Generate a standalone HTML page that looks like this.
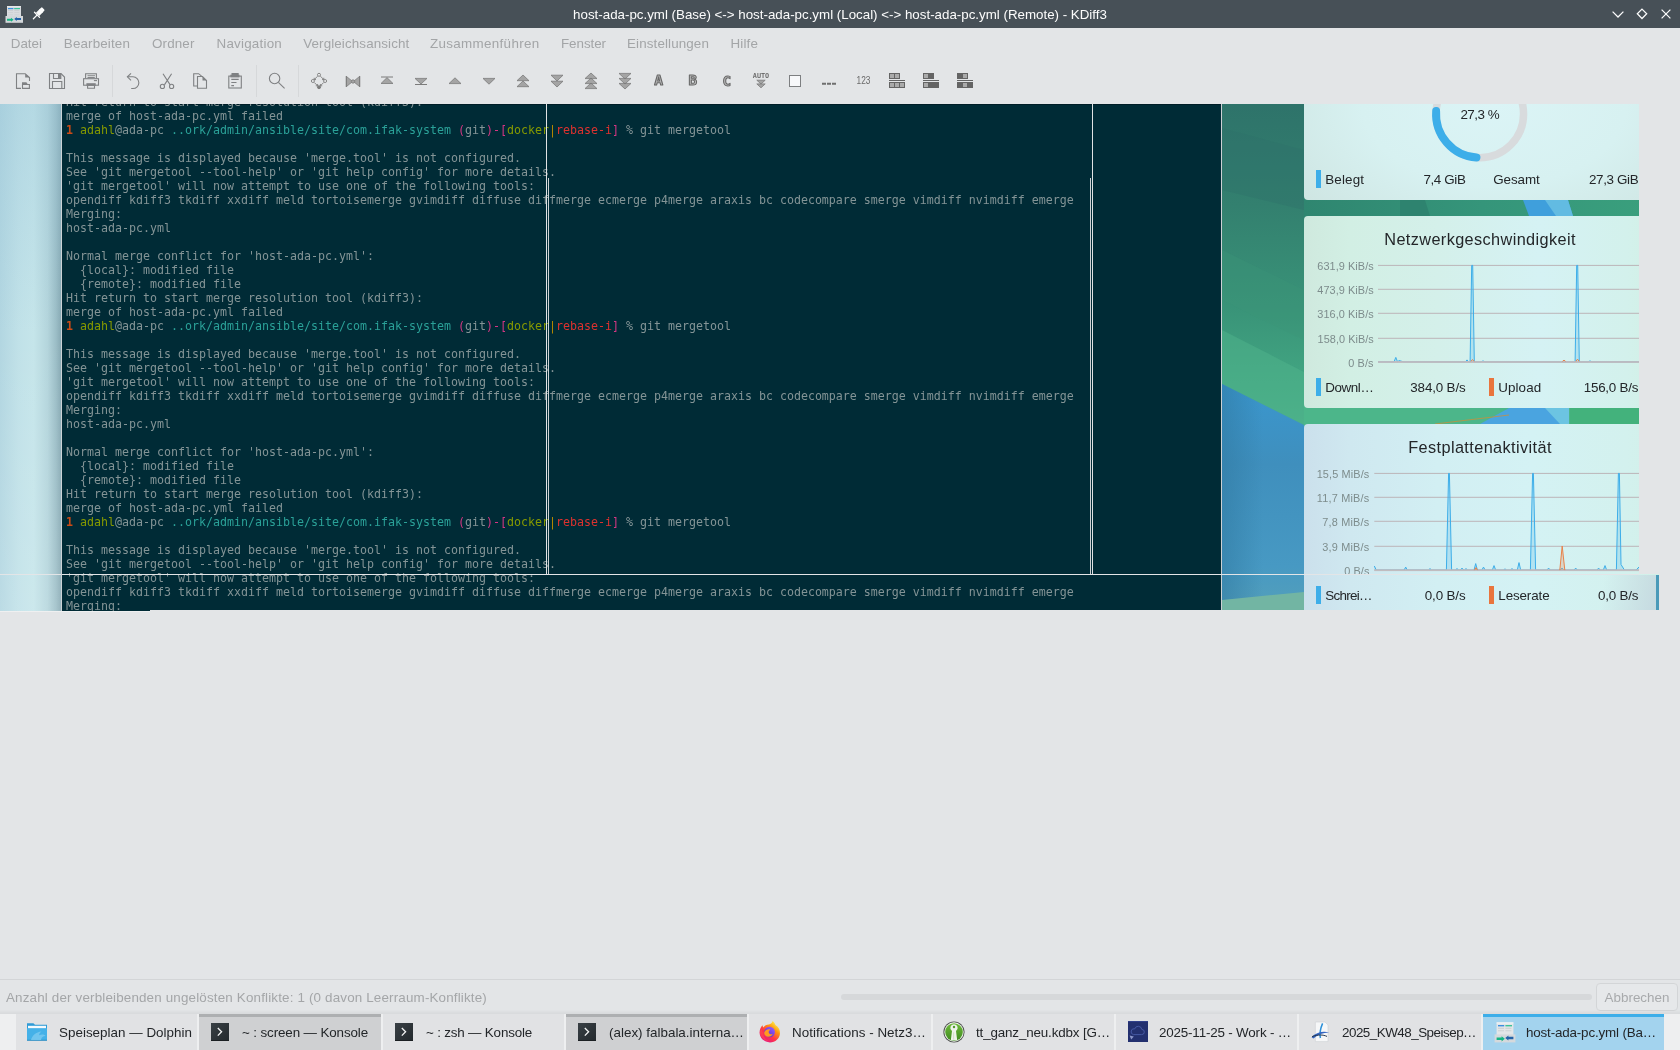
<!DOCTYPE html>
<html lang="de"><head><meta charset="utf-8"><title>KDiff3</title>
<style>
html,body{margin:0;padding:0}
body{width:1680px;height:1050px;overflow:hidden;background:#e3e5e7;position:relative;font-family:"Liberation Sans",sans-serif;font-size:13.33px;color:#232629}
.abs{position:absolute}
#title{left:0;top:0;width:1680px;height:28px;background:#475057}
#title .t{position:absolute;left:0;width:1680px;top:1px;height:28px;line-height:28px;text-align:center;color:#fcfcfc;font-size:13.33px;white-space:nowrap}
#menu{left:0;top:28px;width:1680px;height:30px;white-space:nowrap}
#menu span{position:absolute;top:1px;line-height:30px;color:#a3a5a7;font-size:13.4px}
#shot{left:0;top:104px;width:1680px;height:507px;overflow:hidden}
#term{left:62px;top:0;width:1159px;height:507px;background:#002b36;overflow:hidden;box-shadow:inset 0 1px 0 #001d27}
#term .tx{position:absolute;left:4px;top:-9px;font-family:"DejaVu Sans Mono","Liberation Mono",monospace;font-size:11.63px;color:#839496;white-space:pre}
#term .l{height:14px;line-height:14px}
.o{color:#cb4b16}.g{color:#859900}.c{color:#2aa198}.m{color:#d33682}.y{color:#b58900}.r{color:#dc322f}
.ln{position:absolute;background:#dfe1e3}
#status{left:0;top:0;width:1680px;height:1014px;pointer-events:none}
#task{left:0;top:1014px;width:1680px;height:36px;background:#eeeff0}
.ti{position:absolute;top:0;height:36px;background:#e1e2e4}
.ti .lab{position:absolute;left:43px;top:1px;line-height:36px;font-size:14.2px;color:#232629;white-space:nowrap}
.ti.at{background:#cfd0d2}
.ti.at:before{content:"";position:absolute;left:0;right:0;top:0;height:3px;background:#adafb1}
.ti.cur{background:#a3d3ee}
.ti.cur:before{content:"";position:absolute;left:0;right:0;top:0;height:3px;background:#3daee9}
.card{position:absolute;left:1304px;width:380px;border-radius:4px}
.wt{position:absolute;font-size:13.9px;color:#232629;white-space:nowrap;line-height:18px}
.ax{position:absolute;font-size:11.4px;color:#7f8c8d;white-space:nowrap;line-height:14px;text-align:right}
.ttl{position:absolute;font-size:17px;color:#232629;white-space:nowrap;line-height:22px;text-align:center}
#title,#menu,#tb,#shot,#status,#task{will-change:transform}
</style>
</head><body>
<div id="title" class="abs"><svg class="abs" style="left:0;top:0" width="56" height="28" viewBox="0 0 56 28">
<rect x="7" y="6" width="14" height="11" fill="#d9dcdf"/>
<rect x="7" y="6" width="14" height="1" fill="#e6e8ea"/>
<rect x="5.5" y="16" width="17.5" height="6.8" fill="#d3d7da"/>
<rect x="8" y="8" width="5.4" height="1.2" fill="#3b8fe0"/>
<rect x="14.2" y="8" width="5.8" height="1.2" fill="#3cc39a"/>
<rect x="8" y="10.2" width="5" height="0.6" fill="#c3c7ca"/><rect x="14.3" y="10.2" width="5" height="0.6" fill="#c3c7ca"/>
<rect x="8" y="12.4" width="5" height="0.6" fill="#c9cdd0"/><rect x="14.3" y="12.4" width="5" height="0.6" fill="#c9cdd0"/>
<rect x="8" y="14.6" width="5" height="0.6" fill="#c9cdd0"/><rect x="14.3" y="14.6" width="5" height="0.6" fill="#c9cdd0"/>
<path d="M7 18.8h4v-1l2.6 2-2.6 2v-1h-4z" fill="#16b583"/>
<path d="M21 18h-4.2v-1l-2.6 2 2.6 2v-1H21z" fill="#2463a8"/>
<g stroke="#fcfcfc" fill="none" stroke-linecap="round"><path d="M33.4 18.7L37 15.1" stroke-width="1.3"/><path d="M34.5 12.3L39.6 17.4" stroke-width="1.3"/><path d="M37.6 14.4L41.8 10.2" stroke-width="4.6" stroke-linecap="butt"/></g>
<rect x="39.6" y="7.9" width="4.4" height="4.4" rx="1" fill="#fcfcfc" transform="rotate(45 41.8 10.1)"/>
</svg>
<svg class="abs" style="left:1600px;top:0" width="80" height="28" viewBox="0 0 80 28" fill="none" stroke="#fcfcfc" stroke-width="1.25">
<path d="M12.6 11.6L18 17L23.4 11.6"/>
<path d="M42 9.1L46.7 13.8L42 18.5L37.3 13.8z"/>
<path d="M61.6 9.6L70.4 18.4M70.4 9.6L61.6 18.4"/>
</svg>
<div class="t">host-ada-pc.yml (Base) &lt;-&gt; host-ada-pc.yml (Local) &lt;-&gt; host-ada-pc.yml (Remote) - KDiff3</div></div>
<div id="menu" class="abs"><span style="left:10.8px;letter-spacing:-0.033px">Datei</span><span style="left:63.8px;letter-spacing:0.147px">Bearbeiten</span><span style="left:152.0px;letter-spacing:0.135px">Ordner</span><span style="left:216.5px;letter-spacing:0.222px">Navigation</span><span style="left:303.2px;letter-spacing:0.119px">Vergleichsansicht</span><span style="left:430.0px;letter-spacing:0.325px">Zusammenführen</span><span style="left:561.0px;letter-spacing:-0.058px">Fenster</span><span style="left:627.0px;letter-spacing:0.123px">Einstellungen</span><span style="left:730.5px;letter-spacing:0.141px">Hilfe</span></div>
<svg id="tb" class="abs" style="left:0;top:60px" width="1000" height="43" viewBox="0 60 1000 43">
<rect x="112.0" y="65" width="1" height="32" fill="#d6d8da"/>
<rect x="256.0" y="65" width="1" height="32" fill="#d6d8da"/>
<rect x="298.0" y="65" width="1" height="32" fill="#d6d8da"/>
<g fill="none" stroke="#7f8183" stroke-width="1.1">
<path d="M21 88.4H16.5V73.7H25.2L29.5 77.6V81"/><path d="M25.2 73.7V77.6H29.5z" fill="#7f8183" stroke="none"/><path d="M22.5 84.5H29.4V88.4H22.5z"/><path d="M22 82.2H26.4L27.8 84.2H22z" fill="#7f8183" stroke="none"/>
<path d="M49.5 73.5H61L64.5 77V88.5H49.5z"/><path d="M53.5 73.5V78.5H60.8V73.5"/><rect x="58" y="73.5" width="2.8" height="5" fill="#7f8183" stroke="none"/><path d="M52.5 88.5V81.5H61.8V88.5"/>
<path d="M85.6 78.4V73.7H96.4V78.4"/><path d="M87.5 75.5H95" stroke-opacity=".75"/><path d="M87.5 77.4H94.8"/><rect x="83.6" y="78.7" width="14.9" height="6.5"/><path d="M93.9 80.6H97"/><rect x="86.4" y="83.2" width="9.3" height="2.6" fill="#7f8183" stroke="none"/><path d="M87.6 85.7V88.3H94.5V85.7"/>
<path d="M127.4 76.8H133A5.85 5.85 0 0 1 133 88.5H131.2"/><path d="M131 73.3L127.4 76.8L131 80.3"/>
<path d="M163 73.7L170.2 84.9M171.6 73.7L164.4 84.9"/><circle cx="162.4" cy="86.4" r="2.1"/><circle cx="171.6" cy="86.4" r="2.1"/>
<path d="M197.4 86H193.7V73.7H198.6L201.6 76.2"/><path d="M197.5 76.5H202.5L206.5 80.5V88.3H197.5z"/><path d="M202.5 76.5V80.5H206.5z" fill="#7f8183" stroke="none"/>
<rect x="228.8" y="76.1" width="12.5" height="11.9"/><rect x="230.3" y="74.7" width="9.2" height="2.7" fill="#7f8183" stroke="none"/><rect x="231.5" y="73" width="7.2" height="2" fill="#7f8183" stroke="none"/><path d="M231.3 79.4H238.7M231.3 82.5H236.5M231.3 85.6H234"/>
<circle cx="274.6" cy="78.5" r="5.2"/><path d="M278.4 82.3L284.6 88.3"/>
</g>
<g stroke="#7b7b7b" stroke-width=".9" fill="none"><path d="M317.6 76.2L314.2 79.6M320.4 76.2L323.8 79.6M314.2 82.4L317.6 85.8M323.8 82.4L320.4 85.8"/><path d="M314.2 77.8V79.6H316M323.8 77.8V79.6H322M315.8 85.8H317.6V84M322.2 85.8H320.4V84"/><circle cx="319" cy="74.8" r="1.5" fill="#eef0f1"/><circle cx="312.9" cy="81" r="1.5" fill="#eef0f1"/><circle cx="325.1" cy="81" r="1.5" fill="#eef0f1"/><circle cx="319" cy="87.2" r="1.5" fill="#7b7b7b"/></g>
<g stroke="#7b7b7b" stroke-width=".8" fill="#a4a4a4" stroke-linejoin="miter">
<path d="M346.4 76.4V86.6L352.6 81.5zM359.6 76.4V86.6L353.4 81.5z"/><path d="M346.3 76V87M359.7 76V87" stroke-width="1"/><circle cx="353" cy="81.5" r="1.7"/>
<path d="M387.0 77.6L393.0 83.5H381.0z"/><path d="M381 77H393" stroke-width="1"/>
<path d="M415.0 78.4H427.0L421.0 84.0z"/><path d="M415 84.5H427" stroke-width="1"/>
<path d="M455.0 77.8L461.0 83.6H449.0z"/>
<path d="M483.0 78.4H495.0L489.0 84.2z"/>
<path d="M523.0 75.0L529.0 80.7H517.0zM523.0 81.0L529.0 86.7H517.0z"/>
<path d="M551.0 75.2H563.0L557.0 81.0zM551.0 81.2H563.0L557.0 87.0z"/>
<path d="M591.0 73.0L597.0 78.6H585.0zM591.0 78.0L597.0 83.6H585.0zM591.0 83.0L597.0 88.6H585.0z"/>
<path d="M619.0 73.4H631.0L625.0 79.0zM619.0 78.4H631.0L625.0 84.0zM619.0 83.4H631.0L625.0 89.0z"/>
<path d="M756.8 80.2H765.2L761.0 84.0zM756.8 83.9H765.2L761.0 87.8z"/>
</g>
<g font-family="'DejaVu Sans Mono','Liberation Mono',monospace" font-weight="bold" font-size="13.6" fill="#b8b8b8" stroke="#686868" stroke-width="1" stroke-linejoin="round"><text x="654.2" y="85.4" textLength="8.8" lengthAdjust="spacingAndGlyphs">A</text><text x="688.4" y="85.4" textLength="8.6" lengthAdjust="spacingAndGlyphs">B</text><text x="722.4" y="85.5" textLength="8.6" lengthAdjust="spacingAndGlyphs">C</text></g>
<text x="761" y="78" font-family="'DejaVu Sans Mono','Liberation Mono',monospace" font-weight="bold" font-size="6.8" text-anchor="middle" fill="#6e6e6e" textLength="16.4" lengthAdjust="spacingAndGlyphs">AUTO</text>
<rect x="789.5" y="75.5" width="11" height="11" fill="#f7f8fa" stroke="#7d7f81"/>
<path d="M822 83.7h4M827 83.7h4M832 83.7h4" stroke="#6f6f6f" stroke-width="2"/>
<text x="856.5" y="84" font-family="'Liberation Sans',sans-serif" font-size="10" fill="#6a6a6a" textLength="13.9" lengthAdjust="spacingAndGlyphs">123</text>
<rect x="889" y="73" width="11" height="6" fill="#646464"/><rect x="889" y="80" width="16" height="1" fill="#646464"/><rect x="889" y="82" width="16" height="6" fill="#646464"/><rect x="890" y="74" width="4" height="4" fill="#aaaaaa"/><rect x="895" y="74" width="4" height="4" fill="#aaaaaa"/><rect x="890" y="83" width="4" height="4" fill="#aaaaaa"/><rect x="895" y="83" width="4" height="4" fill="#aaaaaa"/><rect x="900" y="83" width="4" height="4" fill="#aaaaaa"/>
<rect x="923" y="73" width="11" height="6" fill="#646464"/><rect x="923" y="80" width="16" height="1" fill="#646464"/><rect x="923" y="82" width="16" height="6" fill="#646464"/><rect x="924" y="74" width="4" height="4" fill="#aaaaaa"/><rect x="924" y="83" width="4" height="4" fill="#aaaaaa"/>
<rect x="957" y="73" width="11" height="6" fill="#646464"/><rect x="957" y="80" width="16" height="1" fill="#646464"/><rect x="957" y="82" width="16" height="6" fill="#646464"/><rect x="963" y="74" width="4" height="4" fill="#aaaaaa"/><rect x="963" y="83" width="4" height="4" fill="#aaaaaa"/>
</svg>
<div id="shot" class="abs">
<div class="abs" style="left:0;top:0;width:61px;height:507px;background:linear-gradient(90deg,#b2d6e1 0,#c0e1e8 30%,#c5e5ea 55%,#b4d5dc 78%,#9bbdc6 92%,#88aab4 100%)"></div>
<div class="abs" style="left:0;top:0;width:61px;height:507px;background:linear-gradient(180deg,rgba(150,195,215,.35) 0,rgba(255,255,255,0) 45%,rgba(255,255,255,.12) 100%)"></div>
<div id="term" class="abs"><div class="tx"><div class="l">Hit return to start merge resolution tool (kdiff3):</div><div class="l">merge of host-ada-pc.yml failed</div><div class="l"><b class="o">1</b> <span class="g">adahl</span>@ada-pc <span class="c">..ork/admin/ansible/site/com.ifak-system</span> <span class="m">(</span>git<span class="m">)-[</span><span class="g">docker</span><span class="y">|</span><span class="r">rebase-i</span><span class="m">]</span> % git mergetool</div><div class="l">&nbsp;</div><div class="l">This message is displayed because 'merge.tool' is not configured.</div><div class="l">See 'git mergetool --tool-help' or 'git help config' for more details.</div><div class="l">'git mergetool' will now attempt to use one of the following tools:</div><div class="l">opendiff kdiff3 tkdiff xxdiff meld tortoisemerge gvimdiff diffuse diffmerge ecmerge p4merge araxis bc codecompare smerge vimdiff nvimdiff emerge</div><div class="l">Merging:</div><div class="l">host-ada-pc.yml</div><div class="l">&nbsp;</div><div class="l">Normal merge conflict for 'host-ada-pc.yml':</div><div class="l">  {local}: modified file</div><div class="l">  {remote}: modified file</div><div class="l">Hit return to start merge resolution tool (kdiff3):</div><div class="l">merge of host-ada-pc.yml failed</div><div class="l"><b class="o">1</b> <span class="g">adahl</span>@ada-pc <span class="c">..ork/admin/ansible/site/com.ifak-system</span> <span class="m">(</span>git<span class="m">)-[</span><span class="g">docker</span><span class="y">|</span><span class="r">rebase-i</span><span class="m">]</span> % git mergetool</div><div class="l">&nbsp;</div><div class="l">This message is displayed because 'merge.tool' is not configured.</div><div class="l">See 'git mergetool --tool-help' or 'git help config' for more details.</div><div class="l">'git mergetool' will now attempt to use one of the following tools:</div><div class="l">opendiff kdiff3 tkdiff xxdiff meld tortoisemerge gvimdiff diffuse diffmerge ecmerge p4merge araxis bc codecompare smerge vimdiff nvimdiff emerge</div><div class="l">Merging:</div><div class="l">host-ada-pc.yml</div><div class="l">&nbsp;</div><div class="l">Normal merge conflict for 'host-ada-pc.yml':</div><div class="l">  {local}: modified file</div><div class="l">  {remote}: modified file</div><div class="l">Hit return to start merge resolution tool (kdiff3):</div><div class="l">merge of host-ada-pc.yml failed</div><div class="l"><b class="o">1</b> <span class="g">adahl</span>@ada-pc <span class="c">..ork/admin/ansible/site/com.ifak-system</span> <span class="m">(</span>git<span class="m">)-[</span><span class="g">docker</span><span class="y">|</span><span class="r">rebase-i</span><span class="m">]</span> % git mergetool</div><div class="l">&nbsp;</div><div class="l">This message is displayed because 'merge.tool' is not configured.</div><div class="l">See 'git mergetool --tool-help' or 'git help config' for more details.</div><div class="l">'git mergetool' will now attempt to use one of the following tools:</div><div class="l">opendiff kdiff3 tkdiff xxdiff meld tortoisemerge gvimdiff diffuse diffmerge ecmerge p4merge araxis bc codecompare smerge vimdiff nvimdiff emerge</div><div class="l">Merging:</div></div></div>
<div id="wall" class="abs" style="left:1222px;top:0;width:437px;height:507px;overflow:hidden;background:linear-gradient(180deg,#2e736a 0,#33806f 20%,#399378 40%,#42a682 55%,#4db48b 68%)">
<svg class="abs" style="left:0;top:0" width="437" height="507" viewBox="1222 104 437 507">
<defs><linearGradient id="bl" x1="0" y1="0" x2="0" y2="1"><stop offset="0" stop-color="#3a97cf"/><stop offset=".35" stop-color="#3f8fbd"/><stop offset=".8" stop-color="#4799c3"/><stop offset="1" stop-color="#55a0b9"/></linearGradient><linearGradient id="bl2" x1="0" y1="0" x2="1" y2="0"><stop offset="0" stop-color="#2f78a0" stop-opacity=".55"/><stop offset=".5" stop-color="#2f78a0" stop-opacity="0"/></linearGradient></defs>
<path d="M1222 128L1304 150V210L1222 190z" fill="#2f6f69" opacity=".35"/><path d="M1222 250L1304 290V340L1222 300z" fill="#3c9678" opacity=".35"/><path d="M1222 330L1304 372V425L1222 384z" fill="#4fb48c" opacity=".5"/>
<path d="M1222 384L1304 425H1660V612H1222z" fill="url(#bl)"/><path d="M1222 384L1304 425V612H1222z" fill="url(#bl2)"/><path d="M1222 600L1304 592V612H1222z" fill="#72b5a3"/>
<defs><linearGradient id="g1g" x1="0" y1="0" x2="1" y2="0"><stop offset="0" stop-color="#2f8670"/><stop offset=".5" stop-color="#35957a"/><stop offset="1" stop-color="#3aa07d"/></linearGradient></defs><rect x="1304" y="198" width="356" height="20" fill="url(#g1g)"/><path d="M1400 200H1425L1430 216H1400z" fill="#2b7c6a" opacity=".6"/><path d="M1523 200H1568L1573 216H1529z" fill="#3f9fdc"/><path d="M1545 200H1568L1573 216H1556z" fill="#62bbe2"/><rect x="1304" y="406" width="356" height="20" fill="#4cb68a"/><path d="M1509 408H1569V424H1480z" fill="#4aa4e0"/><path d="M1545 408H1569V424H1560z" fill="#6cc4e2"/><rect x="1570" y="406" width="90" height="20" fill="#43b27c"/><path d="M1435 424L1509 415" stroke="#c88f3c" stroke-width=".8"/>
</svg>
<div class="card" style="left:82px;top:-40px;height:136px;background:radial-gradient(ellipse 240px 150px at 190px 40px,#dbf4f6 0,#d7f1f1 55%,#cfe6e3 100%)"><svg class="abs" style="left:116px;top:40px" width="120" height="70" viewBox="1420 104 120 70"><circle cx="1479.80" cy="113.90" r="43.75" fill="none" stroke="#d8dbdd" stroke-width="7.5"/><path d="M1476.52 157.53A43.75 43.75 0 0 1 1436.15 110.92" fill="none" stroke="#3daee9" stroke-width="7.9" stroke-linecap="round"/></svg><div class="abs" style="left:156.40px;top:40.76px;line-height:19px;font-size:13.4px;letter-spacing:-0.467px;color:#232629;white-space:nowrap">27,3 %</div><div class="abs" style="left:12.1px;top:106.0px;width:4.8px;height:17.7px;background:#3daee9"></div><div class="abs" style="left:21.30px;top:105.66px;line-height:19px;font-size:13.4px;letter-spacing:0.139px;color:#232629;white-space:nowrap">Belegt</div><div class="abs" style="left:119.40px;top:105.66px;line-height:19px;font-size:13.4px;letter-spacing:-0.367px;color:#232629;white-space:nowrap">7,4 GiB</div><div class="abs" style="left:189.20px;top:105.66px;line-height:19px;font-size:13.4px;letter-spacing:-0.048px;color:#232629;white-space:nowrap">Gesamt</div><div class="abs" style="left:285.00px;top:105.66px;line-height:19px;font-size:13.4px;letter-spacing:-0.351px;color:#232629;white-space:nowrap">27,3 GiB</div></div>
<div class="card" style="left:82px;top:112px;height:192px;background:linear-gradient(90deg,#cfe9de 0,#d2efe4 12%,#d4f0ea 35%,#d5f2f4 62%,#d3f1ec 85%,#d0efde 100%)"><svg class="abs" style="left:0;top:0" width="380" height="192" viewBox="1304 216 380 192"><rect x="1378" y="264.9" width="300" height="1" fill="#bcb5b8"/><rect x="1378" y="288.8" width="300" height="1" fill="#bcb5b8"/><rect x="1378" y="312.8" width="300" height="1" fill="#bcb5b8"/><rect x="1378" y="337.8" width="300" height="1" fill="#bcb5b8"/><rect x="1378" y="361.4" width="300" height="1" fill="#bcb5b8"/><path d="M1378 361.9L1394.0 361.9L1395.8 357.4L1397.6 361.9L1399 360.6L1404 361.9L1465.5 361.9L1467.0 359.9L1468.5 361.9L1470.1 361.9L1471.7 265.4L1472.7 265.4L1474.3 361.9L1481.0 361.9L1483.0 360.9L1485.0 361.9L1575.1 361.9L1576.7 265.4L1577.7 265.4L1579.3 361.9L1588.0 361.9L1590.0 360.9L1592.0 361.9L1660 361.9L1660 361.9L1378 361.9z" fill="#3daee9" fill-opacity=".22" stroke="none"/><path d="M1378 361.9L1394.0 361.9L1395.8 357.4L1397.6 361.9L1399 360.6L1404 361.9L1465.5 361.9L1467.0 359.9L1468.5 361.9L1470.1 361.9L1471.7 265.4L1472.7 265.4L1474.3 361.9L1481.0 361.9L1483.0 360.9L1485.0 361.9L1575.1 361.9L1576.7 265.4L1577.7 265.4L1579.3 361.9L1588.0 361.9L1590.0 360.9L1592.0 361.9L1660 361.9" fill="none" stroke="#3daee9" stroke-width="1"/><rect x="1378" y="361.1" width="300" height="1.8" fill="#c1bcbf"/><path d="M1471.0 361.3L1472.5 359.5L1474.0 361.3M1562.5 361.3L1564.0 360.1L1565.5 361.3M1576.0 361.3L1577.5 359.1L1579.0 361.3" fill="none" stroke="#e9824a" stroke-width="1"/></svg><div class="abs" style="left:80.30px;top:11.65px;line-height:23px;font-size:16.3px;letter-spacing:0.378px;color:#232629;white-space:nowrap">Netzwerkgeschwindigkeit</div><div class="abs" style="left:13.30px;top:43.02px;line-height:15px;font-size:10.9px;letter-spacing:0.072px;color:#7d8c8c;white-space:nowrap">631,9 KiB/s</div><div class="abs" style="left:13.30px;top:66.92px;line-height:15px;font-size:10.9px;letter-spacing:0.072px;color:#7d8c8c;white-space:nowrap">473,9 KiB/s</div><div class="abs" style="left:13.30px;top:90.92px;line-height:15px;font-size:10.9px;letter-spacing:0.072px;color:#7d8c8c;white-space:nowrap">316,0 KiB/s</div><div class="abs" style="left:13.60px;top:115.92px;line-height:15px;font-size:10.9px;letter-spacing:0.045px;color:#7d8c8c;white-space:nowrap">158,0 KiB/s</div><div class="abs" style="left:44.20px;top:139.52px;line-height:15px;font-size:10.9px;letter-spacing:0.114px;color:#7d8c8c;white-space:nowrap">0 B/s</div><div class="abs" style="left:12.1px;top:162.0px;width:4.8px;height:17.7px;background:#3daee9"></div><div class="abs" style="left:21.30px;top:161.66px;line-height:19px;font-size:13.4px;letter-spacing:-0.418px;color:#232629;white-space:nowrap">Downl…</div><div class="abs" style="left:106.30px;top:161.66px;line-height:19px;font-size:13.4px;letter-spacing:-0.153px;color:#232629;white-space:nowrap">384,0 B/s</div><div class="abs" style="left:184.9px;top:162.0px;width:4.8px;height:17.7px;background:#e9753d"></div><div class="abs" style="left:194.30px;top:161.66px;line-height:19px;font-size:13.4px;letter-spacing:0.077px;color:#232629;white-space:nowrap">Upload</div><div class="abs" style="left:279.70px;top:161.66px;line-height:19px;font-size:13.4px;letter-spacing:-0.220px;color:#232629;white-space:nowrap">156,0 B/s</div></div>
<div class="card" style="left:82px;top:320px;height:200px;background:linear-gradient(90deg,#cbe0ec 0,#cfe8f0 12%,#d2eff3 35%,#d4f2f4 60%,#d3f1ee 85%,#d1efe2 100%)"><svg class="abs" style="left:0;top:0" width="380" height="192" viewBox="1304 424 380 192"><rect x="1374.3" y="472.9" width="300" height="1" fill="#bcb5b8"/><rect x="1374.3" y="496.8" width="300" height="1" fill="#bcb5b8"/><rect x="1374.3" y="520.8" width="300" height="1" fill="#bcb5b8"/><rect x="1374.3" y="545.8" width="300" height="1" fill="#bcb5b8"/><rect x="1374.3" y="569.6" width="300" height="1" fill="#bcb5b8"/><path d="M1374.3 566L1376.3 570.1L1404.1 570.1L1405.7 567.1L1407.3 570.1L1428.4 570.1L1430.0 568.6L1431.6 570.1L1446.4 570.1L1448.6 473.4L1449.4 473.4L1451.6 570.1L1455.3 570.1L1457.0 568.6L1458.7 570.1L1460.3 570.1L1462.0 568.1L1463.7 570.1L1464.3 570.1L1466.0 568.6L1467.7 570.1L1474.0 570.1L1475.7 563.6L1477.4 570.1L1481.8 570.1L1483.5 567.1L1485.2 570.1L1492.3 570.1L1494.0 565.6L1495.7 570.1L1503.3 570.1L1505.0 568.9L1506.7 570.1L1510.3 570.1L1512.0 568.6L1513.7 570.1L1517.3 570.1L1519.0 562.6L1520.7 570.1L1530.4 570.1L1532.6 473.4L1533.4 473.4L1535.6 570.1L1546.9 570.1L1548.6 568.1L1550.3 570.1L1560.3 570.1L1562.0 568.1L1563.7 570.1L1574.0 570.1L1575.7 568.1L1577.4 570.1L1596.9 570.1L1598.6 568.1L1600.3 570.1L1603.3 570.1L1605.0 565.6L1606.7 570.1L1616.4 570.1L1618.4 473.4L1619.4 473.4L1621 564.5L1624.5 570.1L1636 570.1L1639 567L1660 570.1L1660 570.1L1374.3 570.1z" fill="#3daee9" fill-opacity=".22" stroke="none"/><path d="M1374.3 566L1376.3 570.1L1404.1 570.1L1405.7 567.1L1407.3 570.1L1428.4 570.1L1430.0 568.6L1431.6 570.1L1446.4 570.1L1448.6 473.4L1449.4 473.4L1451.6 570.1L1455.3 570.1L1457.0 568.6L1458.7 570.1L1460.3 570.1L1462.0 568.1L1463.7 570.1L1464.3 570.1L1466.0 568.6L1467.7 570.1L1474.0 570.1L1475.7 563.6L1477.4 570.1L1481.8 570.1L1483.5 567.1L1485.2 570.1L1492.3 570.1L1494.0 565.6L1495.7 570.1L1503.3 570.1L1505.0 568.9L1506.7 570.1L1510.3 570.1L1512.0 568.6L1513.7 570.1L1517.3 570.1L1519.0 562.6L1520.7 570.1L1530.4 570.1L1532.6 473.4L1533.4 473.4L1535.6 570.1L1546.9 570.1L1548.6 568.1L1550.3 570.1L1560.3 570.1L1562.0 568.1L1563.7 570.1L1574.0 570.1L1575.7 568.1L1577.4 570.1L1596.9 570.1L1598.6 568.1L1600.3 570.1L1603.3 570.1L1605.0 565.6L1606.7 570.1L1616.4 570.1L1618.4 473.4L1619.4 473.4L1621 564.5L1624.5 570.1L1636 570.1L1639 567L1660 570.1" fill="none" stroke="#3daee9" stroke-width="1"/><rect x="1374.3" y="569.3" width="300" height="1.8" fill="#c1bcbf"/><path d="M1474.5 570.1L1476.0 567.6L1477.5 570.1M1559.8 570.1L1562.2 546L1564.8 570.1" fill="#e9824a" fill-opacity=".25" stroke="#e9824a" stroke-width="1"/></svg><div class="abs" style="left:270px;top:151px;width:82px;height:36px;background:linear-gradient(100deg,rgba(200,222,230,0) 0,rgba(200,222,230,0) 35%,#c6dae1 100%)"></div><div class="abs" style="left:104.20px;top:11.65px;line-height:23px;font-size:16.3px;letter-spacing:0.397px;color:#232629;white-space:nowrap">Festplattenaktivität</div><div class="abs" style="left:12.70px;top:43.02px;line-height:15px;font-size:10.9px;letter-spacing:0.125px;color:#7d8c8c;white-space:nowrap">15,5 MiB/s</div><div class="abs" style="left:12.70px;top:66.92px;line-height:15px;font-size:10.9px;letter-spacing:0.206px;color:#7d8c8c;white-space:nowrap">11,7 MiB/s</div><div class="abs" style="left:18.20px;top:90.92px;line-height:15px;font-size:10.9px;letter-spacing:0.199px;color:#7d8c8c;white-space:nowrap">7,8 MiB/s</div><div class="abs" style="left:18.20px;top:115.92px;line-height:15px;font-size:10.9px;letter-spacing:0.199px;color:#7d8c8c;white-space:nowrap">3,9 MiB/s</div><div class="abs" style="left:40.30px;top:139.72px;line-height:15px;font-size:10.9px;letter-spacing:0.054px;color:#7d8c8c;white-space:nowrap">0 B/s</div><div class="abs" style="left:12.1px;top:162.0px;width:4.8px;height:17.7px;background:#3daee9"></div><div class="abs" style="left:21.30px;top:161.66px;line-height:19px;font-size:13.4px;letter-spacing:-0.694px;color:#232629;white-space:nowrap">Schrei…</div><div class="abs" style="left:120.80px;top:161.66px;line-height:19px;font-size:13.4px;letter-spacing:-0.141px;color:#232629;white-space:nowrap">0,0 B/s</div><div class="abs" style="left:184.9px;top:162.0px;width:4.8px;height:17.7px;background:#e9753d"></div><div class="abs" style="left:194.30px;top:161.66px;line-height:19px;font-size:13.4px;letter-spacing:-0.116px;color:#232629;white-space:nowrap">Leserate</div><div class="abs" style="left:293.90px;top:161.66px;line-height:19px;font-size:13.4px;letter-spacing:-0.184px;color:#232629;white-space:nowrap">0,0 B/s</div></div>
<div class="abs" style="left:434px;top:471px;width:3px;height:36px;background:#4a9ab9"></div>
<div class="abs" style="left:417px;top:0;width:20px;height:470px;background:#e3e5e7"></div>
</div>
<div class="ln" style="left:546px;top:0;width:1px;height:470px;background:#e0e2e4"></div>
<div class="ln" style="left:548px;top:74px;width:1px;height:396px;background:#ccd1d4"></div>
<div class="ln" style="left:1092px;top:0;width:1px;height:470px;background:#e0e2e4"></div>
<div class="ln" style="left:1090px;top:74px;width:1px;height:396px;background:#ccd1d4"></div>
<div class="ln" style="left:1221px;top:0;width:1px;height:507px;background:#cdd0d3"></div>
<div class="ln" style="left:0;top:470px;width:1639px;height:1px;background:#e3e5e7"></div>
<div class="ln" style="left:150px;top:506px;width:1530px;height:1px;background:#e3e5e7"></div>
<div class="ln" style="left:61px;top:0;width:1px;height:507px;background:#ccd2d6"></div>
</div>
<div class="abs" id="y611" style="left:0;top:611px;width:150px;height:1px;background:#eff0f1"></div>
<div id="status" class="abs">
<div class="abs" style="left:0;top:979px;width:1680px;height:1px;background:#d3d5d7"></div>
<div class="abs" style="left:6px;top:988px;line-height:20px;color:#a4a6a8;white-space:nowrap;font-size:13.4px;letter-spacing:0.166px">Anzahl der verbleibenden ungelösten Konflikte: 1 (0 davon Leerraum-Konflikte)</div>
<div class="abs" style="left:841px;top:994px;width:751px;height:6px;border-radius:3px;background:#d6d8da"></div>
<div class="abs" style="left:1596px;top:983px;width:80px;height:26px;border:1px solid #d3d5d7;border-radius:4px;background:#e6e8ea"></div>
<div class="abs" style="left:1604.5px;top:988px;line-height:20px;color:#a8aaac;white-space:nowrap;font-size:13.4px;letter-spacing:0.024px">Abbrechen</div>
</div>
<div id="task" class="abs">
<div class="abs" style="left:0;top:-4px;width:1680px;height:4px;background:linear-gradient(180deg,rgba(0,0,0,0),rgba(0,0,0,.05))"></div>
<div class="ti " style="left:16px;width:181px"><svg class="abs" style="left:11px;top:8px" width="20" height="20" viewBox="0 0 20 20"><path d="M0 1.2h6.4l1.6 1.6H20V18H0z" fill="#2f9bd6"/><rect x="1" y="3.8" width="18" height="3" fill="#f4fafd"/><path d="M0 6.2H20V18.6H0z" fill="#45b1e8"/><path d="M0 17.8H20V18.6H0z" fill="#2b86ba"/><path d="M4 18C5 13.5 9 10 14.5 9.4C12.5 11 12 12 12.2 13.2C15 12 17.5 12.5 18.5 14C16 14 14.5 15 14 18z" fill="#7ccaf0" opacity=".8"/></svg><div class="lab" style="font-size:13.4px;letter-spacing:0.024px">Speiseplan — Dolphin</div></div>
<div class="ti at" style="left:199px;width:182px"><svg class="abs" style="left:12px;top:9px" width="18" height="18" viewBox="0 0 18 18"><defs><linearGradient id="kg" x1="0" y1="0" x2="1" y2="1"><stop offset="0" stop-color="#394045"/><stop offset="1" stop-color="#23292d"/></linearGradient></defs><rect width="18" height="17.4" fill="url(#kg)"/><rect y="17" width="18" height="1" fill="#1b1f22"/><path d="M6.8 5L10.6 8.8L6.8 12.6" fill="none" stroke="#f2f3f3" stroke-width="1.3"/></svg><div class="lab" style="font-size:13.4px;letter-spacing:-0.120px">~ : screen — Konsole</div></div>
<div class="ti " style="left:383px;width:181px"><svg class="abs" style="left:12px;top:9px" width="18" height="18" viewBox="0 0 18 18"><defs><linearGradient id="kg" x1="0" y1="0" x2="1" y2="1"><stop offset="0" stop-color="#394045"/><stop offset="1" stop-color="#23292d"/></linearGradient></defs><rect width="18" height="17.4" fill="url(#kg)"/><rect y="17" width="18" height="1" fill="#1b1f22"/><path d="M6.8 5L10.6 8.8L6.8 12.6" fill="none" stroke="#f2f3f3" stroke-width="1.3"/></svg><div class="lab" style="font-size:13.4px;letter-spacing:-0.179px">~ : zsh — Konsole</div></div>
<div class="ti at" style="left:566px;width:181px"><svg class="abs" style="left:12px;top:9px" width="18" height="18" viewBox="0 0 18 18"><defs><linearGradient id="kg" x1="0" y1="0" x2="1" y2="1"><stop offset="0" stop-color="#394045"/><stop offset="1" stop-color="#23292d"/></linearGradient></defs><rect width="18" height="17.4" fill="url(#kg)"/><rect y="17" width="18" height="1" fill="#1b1f22"/><path d="M6.8 5L10.6 8.8L6.8 12.6" fill="none" stroke="#f2f3f3" stroke-width="1.3"/></svg><div class="lab" style="font-size:13.4px;letter-spacing:0.012px">(alex) falbala.interna…</div></div>
<div class="ti " style="left:749px;width:182px"><svg class="abs" style="left:10px;top:6px" width="22" height="23" viewBox="0 0 22 23"><defs><linearGradient id="fg" x1=".85" y1=".1" x2=".2" y2=".95"><stop offset="0" stop-color="#fff44f"/><stop offset=".3" stop-color="#ff980e"/><stop offset=".62" stop-color="#ff3647"/><stop offset="1" stop-color="#e31587"/></linearGradient><linearGradient id="fp" x1=".8" y1=".1" x2=".2" y2=".9"><stop offset="0" stop-color="#9059ff"/><stop offset="1" stop-color="#5b2fc9"/></linearGradient></defs><path d="M13.6 1C15.2 2.2 16 3.6 16.4 5C19.4 6.8 21.2 9.8 21 13.2C20.7 18.4 16.4 22.4 11 22.4C5.2 22.4.6 18 .6 12.6C.6 9.4 2 6.6 3.6 5.2C3.6 6.2 3.9 7 4.4 7.6C5.6 5.6 7.6 4.4 9.8 4.4C11.8 4 13.2 2.8 13.6 1z" fill="url(#fg)"/><circle cx="10.6" cy="12" r="5.3" fill="url(#fp)"/><path d="M5.2 12.4C6.6 9.4 9.6 8.8 11.6 9.8C10.2 10.2 9.4 11.4 9.8 12.8C10.2 14.2 12 14.8 13.8 13.8C13 16.4 10 17.6 7.6 16.4C6 15.6 5 14 5.2 12.4z" fill="#ff9a1f"/><path d="M.8 13C1.6 17.6 5.4 21 10.4 21.4C6.4 20 4 16.4 4.4 12.6C3.4 12 2.6 10.6 2.8 9C1.6 10 .8 11.4.8 13z" fill="#ff4a4a" opacity=".7"/></svg><div class="lab" style="font-size:13.4px;letter-spacing:0.036px">Notifications - Netz3…</div></div>
<div class="ti " style="left:933px;width:181px"><svg class="abs" style="left:10px;top:7px" width="22" height="22" viewBox="0 0 22 22"><defs><linearGradient id="kp" x1="0" y1="0" x2="0" y2="1"><stop offset="0" stop-color="#6fbb3c"/><stop offset="1" stop-color="#3f8a1f"/></linearGradient></defs><circle cx="11" cy="11" r="10.6" fill="#4d504d"/><circle cx="11" cy="11" r="9.7" fill="#f1f4ef"/><circle cx="11" cy="11" r="8.8" fill="url(#kp)"/><path d="M11 3.2a3.7 3.7 0 0 1 2 6.8L14.2 19.2H7.8L9 10A3.7 3.7 0 0 1 11 3.2z" fill="#eef3ea"/><circle cx="11" cy="6" r="1.2" fill="#4f9a28"/><path d="M10.6 11.4V18.6" stroke="#c4d8b8" stroke-width=".7"/></svg><div class="lab" style="font-size:13.4px;letter-spacing:-0.148px">tt_ganz_neu.kdbx [G…</div></div>
<div class="ti " style="left:1116px;width:181px"><svg class="abs" style="left:12px;top:7px" width="20" height="21" viewBox="0 0 20 21"><rect width="20" height="21" fill="#23306f"/><rect width="20" height="1" fill="#31408a"/><path d="M5.4 13.6h8.2a2.6 2.6 0 0 0 .2-5.2a3.6 3.6 0 0 0-7-.6a2.9 2.9 0 0 0-1.4 5.8z" fill="none" stroke="#4a5ca8" stroke-width=".9"/><path d="M1.6 14.4l4.2 1.2l-2.6 2.8z" fill="#8b96c8"/></svg><div class="lab" style="font-size:13.4px;letter-spacing:-0.176px">2025-11-25 - Work - …</div></div>
<div class="ti " style="left:1299px;width:182px"><svg class="abs" style="left:11px;top:7px" width="22" height="22" viewBox="0 0 22 22"><path d="M5.4 1H15l3 3V20.6H5.4z" fill="#f6f7f8" stroke="#cfd2d5" stroke-width=".6"/><path d="M12.6 2.4C10.6 7 9.6 13 10.4 17" fill="none" stroke="#2a8fd8" stroke-width="1.5"/><path d="M1.6 16.2C6 11.4 13 9.6 19.4 11.6C14 11.4 8 13.4 3.4 17.6z" fill="#3466c2"/><path d="M2 15.6C8 13.4 13 13.6 17 15.4" fill="none" stroke="#26364c" stroke-width="1"/></svg><div class="lab" style="font-size:13.4px;letter-spacing:-0.497px">2025_KW48_Speisep…</div></div>
<div class="ti cur" style="left:1483px;width:181px"><svg class="abs" style="left:11px;top:7px" width="22" height="22" viewBox="0 0 22 22"><rect x="2.6" y="1.4" width="16.8" height="12.6" fill="#e3e6e8"/><rect x="2.6" y="1.4" width="16.8" height="1.2" fill="#f2f4f5"/><rect x="0.6" y="13.4" width="20.8" height="8" fill="#d5d9dc"/><rect x="4" y="4" width="6.2" height="1.4" fill="#3b8fe0"/><rect x="11.4" y="4" width="6.6" height="1.4" fill="#3cc39a"/><rect x="4" y="6.8" width="6" height=".8" fill="#c3c7ca"/><rect x="11.4" y="6.8" width="6" height=".8" fill="#c3c7ca"/><rect x="4" y="9.4" width="6" height=".8" fill="#c9cdd0"/><rect x="11.4" y="9.4" width="6" height=".8" fill="#c9cdd0"/><path d="M2.6 16.6h5v-1.4l3.2 2.6-3.2 2.6v-1.4h-5z" fill="#16b583"/><path d="M19.4 15.8h-5v-1.4l-3.2 2.6 3.2 2.6v-1.4h5z" fill="#2463a8"/></svg><div class="lab" style="font-size:13.4px;letter-spacing:-0.161px">host-ada-pc.yml (Ba…</div></div>
</div>
</body></html>
